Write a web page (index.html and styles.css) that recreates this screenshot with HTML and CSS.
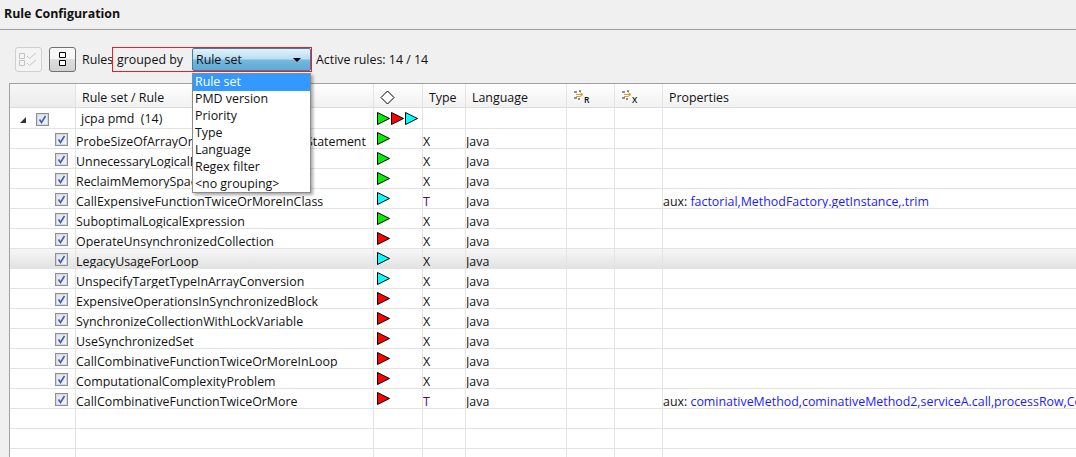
FILE: index.html
```html
<!DOCTYPE html>
<html lang="en">
<head>
  <meta charset="UTF-8" />
  <title>Rule Configuration</title>
  <link rel="stylesheet" href="styles.css">
</head>
<body>
  <svg class="defs" width="0" height="0">
    <symbol id="tri" viewBox="0 0 13 13"><path d="M.5 .5V12.5L12.5 6.5Z" stroke="#000" stroke-width="1"/></symbol>
    <symbol id="dots" viewBox="0 0 10 11">
      <path d="M0 1h3v2H0zM0 7h3v2H0zM5 0h2v2H5z" fill="#8d8d8d"/>
      <path d="M2 4.5h6M6 2.5l3 2-3 2M2 6.500h4" fill="none" stroke="#d2a23a"/>
      <path d="M4 8h2v2H4z" fill="#8d8d8d"/>
    </symbol>
  </svg>

  <h1 class="title">Rule Configuration</h1>

  <div class="toolbar">
    <button class="tool tool-off">
      <svg width="20" height="15" viewBox="0 0 20 15"><path d="M.5 1.500h5v5h-5zM.5 8.500h5v5h-5zM8 4l2.500 2.500L17 1M8 11l2.500 2.500L17 8" fill="none" stroke="#c4c4c4"/></svg>
    </button>
    <button class="tool tool-on">
      <svg width="7" height="15" viewBox="0 0 7 15"><path d="M.5 .5h6v5h-6zM.5 8.500h6v5h-6z" fill="#fff" stroke="#000"/></svg>
    </button>
    <span class="label label-rules">Rules</span>
    <span class="label label-grouped">grouped by</span>
    <div class="combo"><span>Rule set</span><i class="caret"></i></div>
    <span class="label active">Active rules: 14 / 14</span>
    <div class="red-box"></div>
    <ul class="menu">
      <li class="on">Rule set</li>
      <li>PMD version</li>
      <li>Priority</li>
      <li>Type</li>
      <li>Language</li>
      <li>Regex filter</li>
      <li>&lt;no grouping&gt;</li>
    </ul>
  </div>

  <div class="table-wrap">
    <table class="rules">
      <colgroup>
        <col class="c-check"><col class="c-name"><col class="c-pri"><col class="c-type"><col class="c-lang"><col class="c-x"><col class="c-x"><col>
      </colgroup>
      <thead>
        <tr>
          <th></th>
          <th>Rule set / Rule</th>
          <th><svg class="diamond" width="15" height="15" viewBox="0 0 15 15"><path d="M7.5 1L14 7.5 7.5 14 1 7.5Z" fill="#fff" stroke="#000"/></svg></th>
          <th>Type</th>
          <th>Language</th>
          <th class="th-icon"><svg class="dots" width="10" height="11"><use href="#dots"/></svg><small>R</small></th>
          <th class="th-icon"><svg class="dots" width="10" height="11"><use href="#dots"/></svg><small>X</small></th>
          <th>Properties</th>
        </tr>
      </thead>
      <tbody id="rows"></tbody>
    </table>
  </div>

  <script src="rows.js"></script>
</body>
</html>
```

FILE: rows.js
```js
const rules = [
  ["ProbeSizeOfArrayOrCollectionInContextStatement", "g", "X"],
  ["UnnecessaryLogicalExpression", "g", "X"],
  ["ReclaimMemorySpace", "g", "X"],
  ["CallExpensiveFunctionTwiceOrMoreInClass", "c", "T", "factorial,MethodFactory.getInstance,.trim"],
  ["SuboptimalLogicalExpression", "g", "X"],
  ["OperateUnsynchronizedCollection", "r", "X"],
  ["LegacyUsageForLoop", "c", "X"],
  ["UnspecifyTargetTypeInArrayConversion", "c", "X"],
  ["ExpensiveOperationsInSynchronizedBlock", "r", "X"],
  ["SynchronizeCollectionWithLockVariable", "r", "X"],
  ["UseSynchronizedSet", "r", "X"],
  ["CallCombinativeFunctionTwiceOrMoreInLoop", "r", "X"],
  ["ComputationalComplexityProblem", "r", "X"],
  ["CallCombinativeFunctionTwiceOrMore", "r", "T", "cominativeMethod,cominativeMethod2,serviceA.call,processRow,Collections.sort"],
];

const checkbox = '<span class="check"><svg width="9" height="9" viewBox="0 0 9 9"><path d="M1.500 4.500l2 3L7.500 1" fill="none" stroke="#3f5fb0" stroke-width="1.600"/></svg></span>';
const tri = (c) => `<svg class="tri ${c}" width="13" height="13"><use href="#tri"/></svg>`;

let html = `<tr class="group">
  <td><div class="group-check"><i class="twisty"></i>${checkbox}</div></td>
  <td class="group-name">jcpa pmd&nbsp; (14)</td>
  <td class="icons">${tri("g")}${tri("r")}${tri("c")}</td>
  <td></td><td></td><td></td><td></td><td></td>
</tr>`;

rules.forEach((r) => {
  const props = r[3] ? `aux: <span class="val">${r[3]}</span>` : "";
  const sel = r[0] === "LegacyUsageForLoop" ? ' class="sel"' : "";
  html += `<tr${sel}>
    <td class="checkcell">${checkbox}</td>
    <td>${r[0]}</td>
    <td class="icons">${tri(r[1])}</td>
    <td class="${r[2] === "T" ? "t" : ""}">${r[2]}</td>
    <td>Java</td><td></td><td></td>
    <td>${props}</td>
  </tr>`;
});

for (let i = 0; i < 3; i++) {
  html += "<tr><td></td><td></td><td></td><td></td><td></td><td></td><td></td><td></td></tr>";
}

document.getElementById("rows").innerHTML = html;
```

FILE: styles.css
```css
html, body {
  height: 100%;
}
body {
  margin: 0;
  display: flex;
  flex-direction: column;
  background: #f0f0f0;
  font-family: "Open Sans", "Noto Sans", sans-serif;
  font-size: 12.4px;
  color: #111;
  overflow: hidden;
}
.defs {
  position: absolute;
}
.title {
  margin: 0;
  flex: none;
  height: 30px;
  padding: 6px 0 0 4px;
  box-sizing: border-box;
  font-size: 12.4px;
  line-height: 16px;
  font-weight: 700;
  color: #111;
  border-bottom: 1px solid #a0a0a0;
}
.toolbar {
  position: relative;
  z-index: 1;
  flex: none;
  display: flex;
  align-items: center;
  height: 25px;
  margin: 17px 0 11px 15px;
}
.tool {
  width: 27px;
  height: 25px;
  padding: 0;
  display: flex;
  align-items: center;
  justify-content: center;
  box-sizing: border-box;
  border-radius: 3px;
}
.tool-off {
  margin-right: 7px;
  border: 1px solid #cfcfcf;
  background: #f4f4f4;
}
.tool-on {
  margin-right: 6px;
  border: 1px solid #707070;
  background: linear-gradient(#f7f7f7 50%, #dedede 50%, #d2d2d2);
}
.label {
  white-space: nowrap;
}
.label-rules {
  width: 30px;
}
.label-grouped {
  margin-left: 5px;
  width: 75px;
}
.combo {
  width: 119px;
  height: 23px;
  box-sizing: border-box;
  padding: 0 9px 0 3px;
  display: flex;
  align-items: center;
  justify-content: space-between;
  border: 1px solid #3c7fa8;
  border-radius: 2px;
  background: linear-gradient(#e4f2fb, #b8ddf3 48%, #74b9e0 52%, #5fa9d4);
}
.caret {
  border-left: 4px solid transparent;
  border-right: 4px solid transparent;
  border-top: 4px solid #000;
}
.active {
  margin-left: 5px;
}
.red-box {
  position: absolute;
  left: 97px;
  top: 0;
  width: 200px;
  height: 25px;
  box-sizing: border-box;
  border: 1px solid #ee1c25;
  pointer-events: none;
}
.menu {
  position: absolute;
  z-index: 2;
  left: 177px;
  top: 26px;
  width: 119px;
  height: 120px;
  box-sizing: border-box;
  margin: 0;
  padding: 0;
  list-style: none;
  background: #fff;
  border: 1px solid #8a8a8a;
  box-shadow: 2px 2px 3px rgba(0, 0, 0, 0.35);
}
.menu li {
  height: 17px;
  line-height: 16px;
  padding-left: 2px;
}
.menu li.on {
  background: #3399ff;
  color: #fff;
}
.table-wrap {
  flex: 1;
  min-height: 0;
  overflow: hidden;
}
.rules {
  table-layout: fixed;
  border-collapse: separate;
  border-spacing: 0;
  width: 1067px;
  margin-left: 9px;
  background: #fff;
  border-top: 1px solid #a0a0a0;
  border-left: 1px solid #a0a0a0;
}
.c-check { width: 66px; }
.c-name { width: 298px; }
.c-pri { width: 49px; }
.c-type { width: 43px; }
.c-lang { width: 101px; }
.c-x { width: 48px; }
th {
  height: 24px;
  box-sizing: border-box;
  padding: 3px 0 0 6px;
  text-align: left;
  font-weight: 400;
  background: linear-gradient(#fff, #f1f1f1);
  border-right: 1px solid #e4e4e4;
  border-bottom: 1px solid #dcdcdc;
  white-space: nowrap;
  overflow: hidden;
}
th:first-child {
  background: linear-gradient(#f6f6f6, #ececec);
}
th:last-child, td:last-child {
  border-right: 0;
}
.th-icon {
  padding: 0 0 0 7px;
}
th small {
  font-size: 8.5px;
  font-weight: 600;
  vertical-align: -3px;
}
td {
  height: 20px;
  box-sizing: border-box;
  padding: 6px 0 0;
  line-height: 13px;
  vertical-align: top;
  border-right: 1px solid #e3e3e3;
  border-bottom: 1px solid #e3e3e3;
  white-space: nowrap;
  overflow: hidden;
}
.group td {
  height: 21px;
}
.group-check {
  display: flex;
  align-items: center;
  padding-left: 10px;
}
.group-name {
  padding: 4px 0 0 5px;
}
.check {
  display: flex;
  align-items: center;
  justify-content: center;
  width: 13px;
  height: 13px;
  box-sizing: border-box;
  border: 1px solid #8e8f8f;
  background: linear-gradient(135deg, #dfe2ee, #f4f5fa);
  box-shadow: inset 0 0 0 1px #d3d7e6;
}
.checkcell .check {
  margin: -2px 7px 0 auto;
}
.twisty {
  display: block;
  margin-right: 10px;
  border-left: 6px solid transparent;
  border-bottom: 6px solid #333;
}
.group td:first-child {
  padding-top: 5px;
}
.group .icons {
  padding-top: 4px;
}
.icons {
  padding: 3px 0 0 3px;
}
.tri {
  display: inline-block;
  vertical-align: top;
  margin-right: 1px;
}
.tri.g { fill: #00ee00; }
.tri.r { fill: #ff0000; }
.tri.c { fill: #00ffff; }
.t {
  color: #4b0b6e;
}
.val {
  color: #1a1aff;
}
.sel td {
  background: linear-gradient(#f7f7f7, #e2e2e2);
}
.dots {
  vertical-align: -1px;
}
.diamond {
  vertical-align: -3px;
}
```
